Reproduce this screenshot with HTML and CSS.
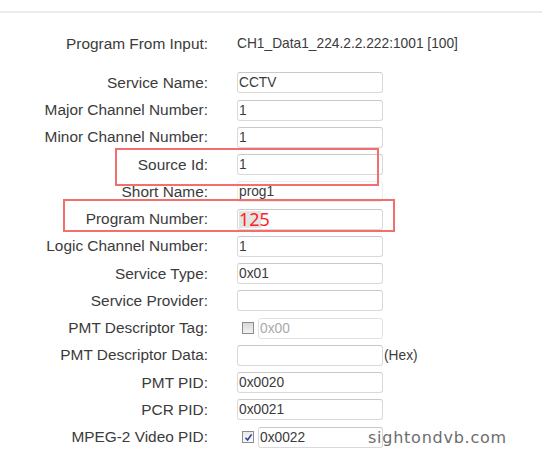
FILE: index.html
```html
<!DOCTYPE html>
<html lang="en">
<head>
    <meta charset="UTF-8">
    <title>Program Settings</title>
    <link rel="stylesheet" href="styles.css">
</head>
<body>
    <div class="page">
        <div class="top-rule"></div>
        <div class="form">
            <div class="row row-info">
                <label>Program From Input:</label>
                <span class="value">CH1_Data1_224.2.2.222:1001 [100]</span>
            </div>
            <div class="row">
                <label>Service Name:</label>
                <input class="field" type="text" value="CCTV">
            </div>
            <div class="row">
                <label>Major Channel Number:</label>
                <input class="field" type="text" value="1">
            </div>
            <div class="row">
                <label>Minor Channel Number:</label>
                <input class="field" type="text" value="1">
            </div>
            <div class="row">
                <label>Source Id:</label>
                <input class="field" type="text" value="1">
            </div>
            <div class="row">
                <label>Short Name:</label>
                <input class="field field-faint" type="text" value="prog1">
            </div>
            <div class="row">
                <label>Program Number:</label>
                <div class="field field-edit"><span class="mark">125</span></div>
            </div>
            <div class="row">
                <label>Logic Channel Number:</label>
                <input class="field" type="text" value="1">
            </div>
            <div class="row">
                <label>Service Type:</label>
                <input class="field" type="text" value="0x01">
            </div>
            <div class="row">
                <label>Service Provider:</label>
                <input class="field" type="text" value="">
            </div>
            <div class="row">
                <label>PMT Descriptor Tag:</label>
                <div class="combo">
                    <span class="check"></span>
                    <input class="field field-short" type="text" value="0x00" disabled>
                </div>
            </div>
            <div class="row">
                <label>PMT Descriptor Data:</label>
                <div class="combo">
                    <input class="field" type="text" value="">
                    <span class="unit">(Hex)</span>
                </div>
            </div>
            <div class="row">
                <label>PMT PID:</label>
                <input class="field" type="text" value="0x0020">
            </div>
            <div class="row">
                <label>PCR PID:</label>
                <input class="field" type="text" value="0x0021">
            </div>
            <div class="row">
                <label>MPEG-2 Video PID:</label>
                <div class="combo">
                    <span class="check checked">
                        <svg width="9" height="9" viewBox="0 0 9 9"><path d="M1.5 4.8 L3.6 7 L7.6 1.4" fill="none" stroke="#2a3f9e" stroke-width="1.6"/></svg>
                    </span>
                    <input class="field field-short" type="text" value="0x0022">
                </div>
            </div>
            <div class="row">
                <label></label>
                <div class="combo">
                    <span class="check checked"></span>
                    <input class="field field-short" type="text" value="">
                </div>
            </div>
        </div>

        <div class="note note-source"></div>
        <div class="note note-program"></div>
        <div class="watermark">sightondvb.com</div>
    </div>
</body>
</html>
```

FILE: styles.css
```css
body {
    margin: 0;
    padding: 0;
    background-color: #fff;
    font-family: "Liberation Sans", Arial, sans-serif;
    color: #3b3b3b;
    overflow: hidden;
}

.page {
    position: relative;
    width: 544px;
    height: 454px;
    overflow: hidden;
}

.top-rule {
    margin-top: 11px;
    width: 542px;
    height: 2px;
    background-color: #ececec;
}

.form {
    padding-top: 17px;
}

.row {
    display: grid;
    grid-template-columns: 208px 1fr;
    column-gap: 29px;
    align-items: center;
    height: 27.25px;
}

.row-info {
    margin-bottom: 12px;
}

.row label {
    text-align: right;
    font-size: 15.4px;
    white-space: nowrap;
}

.value {
    font-size: 13.75px;
}

.field {
    box-sizing: border-box;
    width: 146px;
    height: 21px;
    margin: 0;
    padding: 0 1px;
    border: 1px solid #d9d9dc;
    border-top-color: #c9c9cc;
    border-radius: 3px;
    background-color: #fff;
    font-family: "Liberation Sans", Arial, sans-serif;
    font-size: 13.75px;
    color: #3b3b3b;
    outline: none;
}

.field-faint {
    border-color: #ececef;
}

.field-short {
    width: 125px;
}

.field:disabled {
    color: #aaa;
    background-color: #fff;
    border-color: #e2e2e4;
}

.field-edit {
    display: flex;
    align-items: center;
}

.mark {
    font-family: "Noto Sans", sans-serif;
    font-size: 18px;
    line-height: 17px;
    color: #ff2222;
    background: linear-gradient(to right, #e4e4e4 0, #e4e4e4 70%, transparent 70%);
}

.combo {
    display: flex;
    align-items: center;
}

.check {
    box-sizing: border-box;
    width: 12px;
    height: 12px;
    margin: 0 4px 0 5px;
    border: 1px solid #8c8c8c;
    background: linear-gradient(#d8d8d8, #f2f2f2);
    display: flex;
    align-items: center;
    justify-content: center;
}

.check.checked {
    background: linear-gradient(#eaeaea, #fafafa);
}

.unit {
    font-size: 13.75px;
    margin-left: 1px;
}

.note {
    position: absolute;
    border: 2px solid #f46e6e;
}

.note-source {
    left: 115px;
    top: 148px;
    width: 260px;
    height: 34px;
}

.note-program {
    left: 63px;
    top: 199px;
    width: 328px;
    height: 29px;
}

.watermark {
    position: absolute;
    left: 368px;
    top: 428px;
    font-family: "DejaVu Sans", sans-serif;
    font-size: 16px;
    letter-spacing: 0.75px;
    color: #6d6d6d;
}
```
